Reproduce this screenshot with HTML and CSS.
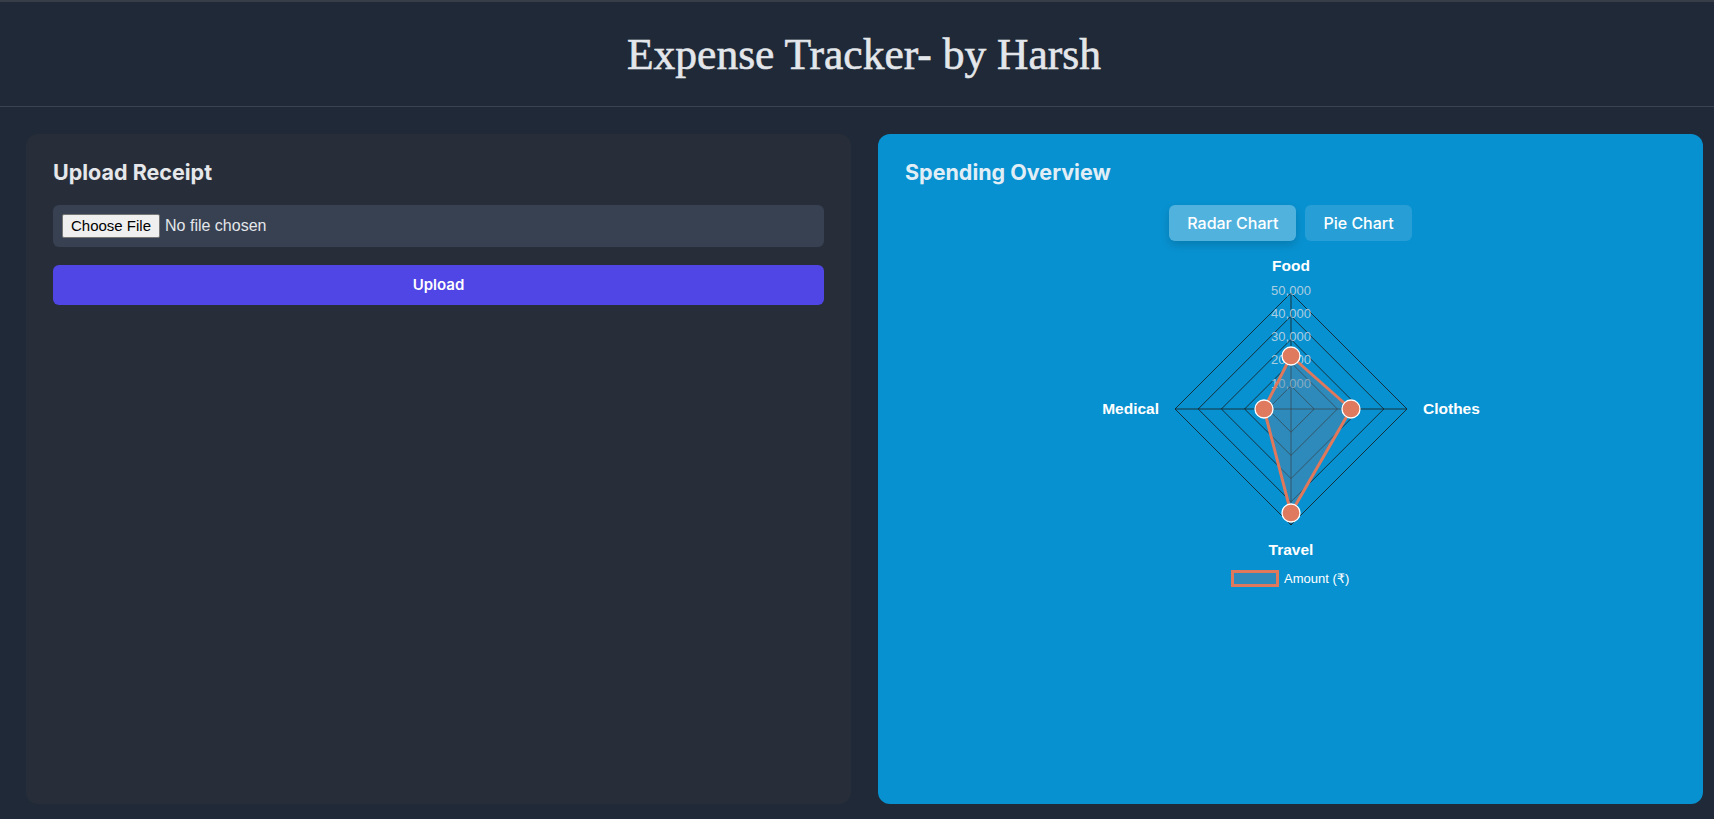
FILE: index.html
```html
<!DOCTYPE html>
<html lang="en">
<head>
<meta charset="utf-8">
<title>Expense Tracker</title>
<link rel="stylesheet" href="styles.css">
</head>
<body>
<header class="site-header">
  <h1 class="site-title">Expense Tracker- by Harsh</h1>
</header>
<main class="layout">
  <section class="card card-upload">
    <h2 class="card-title">Upload Receipt</h2>
    <div class="file-field">
      <span class="file-button">Choose File</span>
      <span class="file-name">No file chosen</span>
    </div>
    <button class="upload-button" type="button">Upload</button>
  </section>
  <section class="card card-chart">
    <h2 class="card-title">Spending Overview</h2>
    <div class="tabs">
      <button class="tab tab-active" type="button">Radar Chart</button>
      <button class="tab" type="button">Pie Chart</button>
    </div>
    <svg class="radar" width="441" height="345" viewBox="0 0 441 345" xmlns="http://www.w3.org/2000/svg">
      <g class="grid" fill="none" stroke="rgba(25,25,25,0.8)" stroke-width="1">
        <polygon points="221,45 337,161 221,277 105,161"/>
        <polygon points="221,68.2 313.8,161 221,253.8 128.2,161"/>
        <polygon points="221,91.4 290.6,161 221,230.6 151.4,161"/>
        <polygon points="221,114.6 267.4,161 221,207.4 174.6,161"/>
        <polygon points="221,137.8 244.2,161 221,184.2 197.8,161"/>
        <line x1="221" y1="161" x2="221" y2="45"/>
        <line x1="221" y1="161" x2="337" y2="161"/>
        <line x1="221" y1="161" x2="221" y2="277"/>
        <line x1="221" y1="161" x2="105" y2="161"/>
      </g>
      <g class="ticks">
        <text x="221" y="46.7">50,000</text>
        <text x="221" y="69.9">40,000</text>
        <text x="221" y="93.1">30,000</text>
        <text x="221" y="116.3">20,000</text>
        <text x="221" y="139.5">10,000</text>
      </g>
      <g class="labels">
        <text x="221" y="22.5" text-anchor="middle">Food</text>
        <text x="353" y="166" text-anchor="start">Clothes</text>
        <text x="221" y="306.5" text-anchor="middle">Travel</text>
        <text x="89" y="166" text-anchor="end">Medical</text>
      </g>
      <polygon class="area" points="221,108 281,161 221,265 194,161"/>
      <g class="points">
        <circle cx="221" cy="108" r="9"/>
        <circle cx="281" cy="161" r="9"/>
        <circle cx="221" cy="265" r="9"/>
        <circle cx="194" cy="161" r="9"/>
      </g>
      <rect class="legend-box" x="162.5" y="323.5" width="45" height="14"/>
      <text class="legend-text" x="214" y="335">Amount (₹)</text>
    </svg>
  </section>
</main>
</body>
</html>
```
FILE: styles.css
```css
* { box-sizing: border-box; }

html, body {
  margin: 0;
  padding: 0;
}

body {
  background: #1f2937;
  font-family: Inter, "Noto Sans", "Liberation Sans", sans-serif;
  color: #e5e7eb;
  height: 819px;
  overflow: hidden;
}

.site-header {
  border-top: 2px solid #383e48;
  border-bottom: 1px solid #3a4352;
  padding: 26px 0 26px 14px;
  text-align: center;
}

.site-title {
  margin: 0;
  font-family: "Liberation Serif", "DejaVu Serif", serif;
  font-weight: normal;
  font-size: 43.5px;
  line-height: 52px;
  color: #e3e6ea;
  -webkit-text-stroke: 0.6px #e3e6ea;
}

.layout {
  display: grid;
  grid-template-columns: 1fr 1fr;
  gap: 27px;
  padding: 27px 11px 15px 26px;
}

.card {
  height: 670px;
  border-radius: 12px;
  padding: 24px 27px;
}

.card-upload {
  background: #272e39;
}

.card-chart {
  background: #0891d0;
  display: flex;
  flex-direction: column;
  align-items: stretch;
}

.card-title {
  margin: 0 0 18px;
  font-size: 21.5px;
  line-height: 29px;
  font-weight: 700;
  color: #e5e7eb;
}

.card-chart .card-title {
  color: #e2eef6;
}

.file-field {
  display: flex;
  align-items: center;
  background: #374151;
  border-radius: 6px;
  padding: 9px;
  margin-bottom: 18px;
}

.file-button {
  font-family: "Liberation Sans", Arial, sans-serif;
  font-size: 15px;
  line-height: 18px;
  color: #000;
  background: #efefef;
  border: 1px solid #767676;
  border-radius: 2px;
  padding: 2px 8px;
  height: 24px;
}

.file-name {
  font-family: "Liberation Sans", Arial, sans-serif;
  font-size: 16px;
  color: #e5e7eb;
  margin-left: 5px;
}

.upload-button {
  display: block;
  width: 100%;
  border: none;
  border-radius: 6px;
  background: #4f46e5;
  color: #fff;
  font-family: Inter, "Liberation Sans", sans-serif;
  font-size: 15px;
  font-weight: 600;
  line-height: 20px;
  padding: 10px 0;
}

.tabs {
  display: flex;
  justify-content: center;
  gap: 9px;
}

.tab {
  border: none;
  border-radius: 6px;
  font-family: Inter, "Liberation Sans", sans-serif;
  font-size: 16px;
  font-weight: 500;
  line-height: 20px;
  padding: 8px 18px;
  color: #fff;
  background: rgba(255, 255, 255, 0.13);
}

.tab-active {
  background: rgba(255, 255, 255, 0.3);
  box-shadow: 0 4px 8px rgba(0, 0, 0, 0.15);
}

.radar {
  display: block;
  margin: 7px auto 0;
}

.ticks text {
  font-family: "Liberation Sans", Arial, sans-serif;
  font-size: 13px;
  fill: rgba(215, 222, 230, 0.8);
  text-anchor: middle;
}

.labels text {
  font-family: "Liberation Sans", Arial, sans-serif;
  font-size: 15.5px;
  font-weight: 700;
  fill: #ffffff;
}

.area {
  fill: rgba(90, 130, 160, 0.45);
  stroke: #e0785c;
  stroke-width: 3;
  stroke-linejoin: round;
}

.points circle {
  fill: #e07a5f;
  stroke: #ffffff;
  stroke-width: 1.3;
}

.legend-box {
  fill: rgba(90, 130, 160, 0.45);
  stroke: #e0785c;
  stroke-width: 3;
}

.legend-text {
  font-family: "Liberation Sans", "DejaVu Sans", "Noto Sans", sans-serif;
  font-size: 13px;
  fill: #ffffff;
}
```
